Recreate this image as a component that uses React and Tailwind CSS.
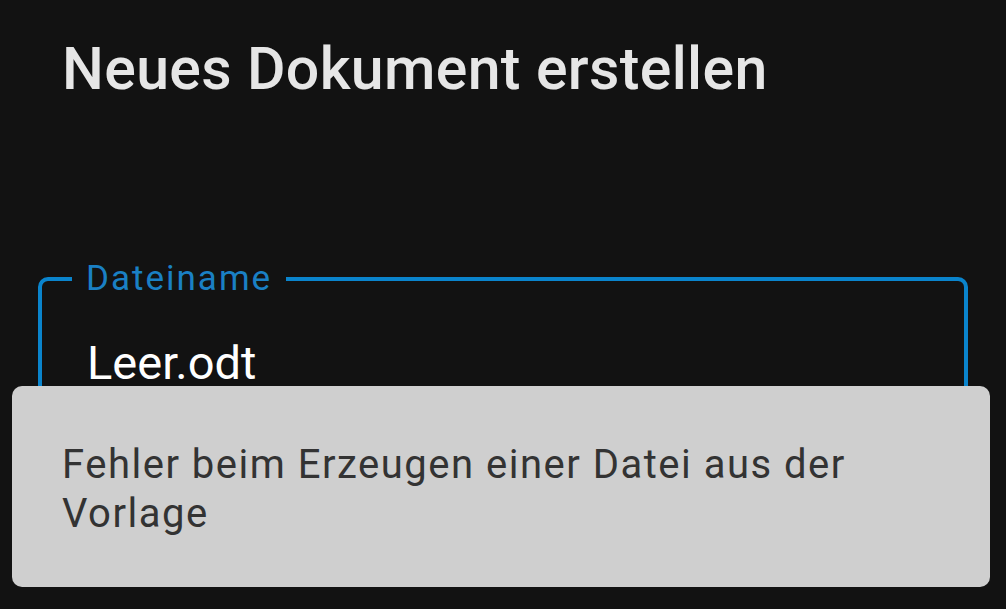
export default function App() {
  return (
    <div className="relative h-[609px] w-[1006px] overflow-hidden bg-[#121212] font-['Roboto',sans-serif]">
      <h1 className="pl-[62px] pt-[34px] text-[59px] font-medium leading-[70px] tracking-[0.35px] text-[#e6e6e6]">
        Neues Dokument erstellen
      </h1>

      <fieldset className="mx-[38px] mt-[156px] h-[200px] rounded-[10px] border-4 border-[#0a84cc] pl-[30px] pr-[40px]">
        <legend className="px-[14px] text-[35px] leading-[38px] tracking-[2px] text-[#1a80c4]">Dateiname</legend>
        <div className="pl-[15px] pt-[39px] text-[47px] leading-[52px] text-white">Leer.odt</div>
      </fieldset>

      <div className="absolute left-[12px] top-[386px] flex h-[201px] w-[978px] items-center rounded-[10px] bg-[#cfcfcf] px-[50px] pt-[4px]">
        <p className="text-[40px] leading-[49px] tracking-[1.5px] text-[#333333]">
          Fehler beim Erzeugen einer Datei aus der Vorlage
        </p>
      </div>
    </div>
  )
}
